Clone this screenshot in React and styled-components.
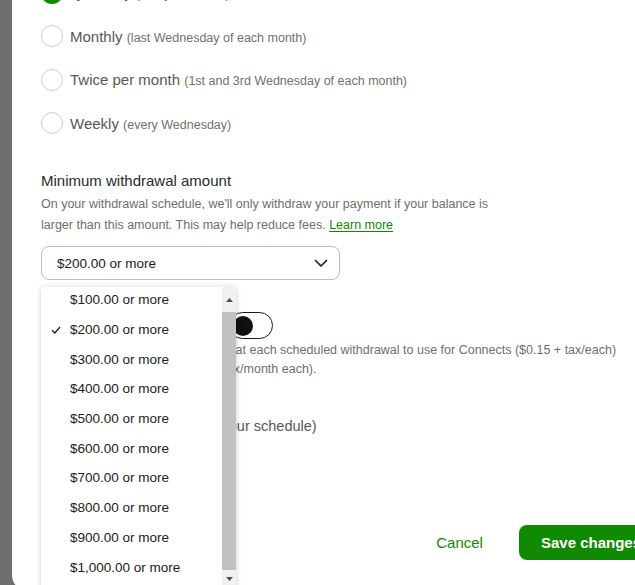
import React from "react";
import styled, { createGlobalStyle } from "styled-components";

const GlobalStyle = createGlobalStyle`
  html, body {
    margin: 0;
    padding: 0;
    background: #6f6f6f;
    overflow: hidden;
  }
  body {
    font-family: "Liberation Sans", Arial, sans-serif;
  }
  * { box-sizing: border-box; }
`;

const Page = styled.div`
  width: 635px;
  height: 585px;
  overflow: hidden;
  padding-left: 12px;
`;

const Modal = styled.div`
  position: relative;
  width: 660px;
  height: 620px;
  margin-top: -29px;
  background: #fff;
  border-bottom-left-radius: 16px;
  padding: 0 9px 0 29px;
`;

const RadioList = styled.div`
  display: flex;
  flex-direction: column;
`;

const RadioRow = styled.label`
  display: flex;
  align-items: center;
  height: 43.5px;
  gap: 7px;
  font-size: 15px;
  color: #575757;
`;

const RadioCircle = styled.span`
  width: 22px;
  height: 22px;
  border-radius: 50%;
  flex: none;
  border: ${(p) => (p.$checked ? "6px solid #108a00" : "1px solid #cfcfcf")};
  background: #fff;
`;

const Sub = styled.span`
  font-size: 12.5px;
  color: #707070;
`;

const Heading = styled.div`
  margin-top: 25px;
  font-size: 15px;
  line-height: 22px;
  color: #2a2a2a;
`;

const Desc = styled.p`
  margin: 2px 0 0;
  font-size: 12.5px;
  line-height: 21px;
  color: #6e6e6e;
  max-width: 460px;
`;

const Link = styled.a`
  color: #108a00;
  text-decoration: underline;
  text-underline-offset: 2px;
`;

const SelectWrap = styled.div`
  position: relative;
  margin-top: 10px;
  width: 299px;
`;

const SelectBox = styled.div`
  height: 34px;
  border: 1px solid #bdbdbd;
  border-radius: 8px;
  display: flex;
  align-items: center;
  justify-content: space-between;
  padding: 0 11px 0 15px;
  font-size: 13.5px;
  color: #222;
`;

const Dropdown = styled.div`
  position: absolute;
  top: 41px;
  left: 0;
  width: 195px;
  height: 305px;
  background: #fff;
  border-radius: 4px 4px 0 0;
  box-shadow: 0 0 6px rgba(0, 0, 0, 0.14), 0 2px 4px rgba(0, 0, 0, 0.08);
  display: flex;
  overflow: hidden;
  z-index: 5;
`;

const Items = styled.ul`
  list-style: none;
  margin: -2px 0 0;
  padding: 0;
  flex: 1;
`;

const Item = styled.li`
  height: 29.7px;
  display: flex;
  align-items: center;
  padding-left: 9px;
  gap: 9px;
  font-size: 13.5px;
  color: #222;
`;

const CheckSlot = styled.span`
  width: 11px;
  display: flex;
  justify-content: center;
`;

const Scrollbar = styled.div`
  width: 14px;
  flex: none;
  background: #f1f1f1;
  display: flex;
  flex-direction: column;
`;

const ScrollArrow = styled.div`
  height: ${(p) => p.$h}px;
  display: flex;
  align-items: center;
  justify-content: center;
  flex: none;
`;

const Thumb = styled.div`
  height: 258px;
  background: #c1c1c1;
  flex: none;
`;

const ToggleRow = styled.div`
  margin-top: 32px;
  width: 232px;
  height: 27px;
  display: flex;
  align-items: center;
  justify-content: space-between;
  font-size: 15px;
  color: #2a2a2a;
`;

const Toggle = styled.span`
  width: 44px;
  height: 27px;
  border: 1px solid #1a1a1a;
  border-radius: 14px;
  display: flex;
  align-items: center;
  padding-left: 3px;
`;

const Knob = styled.span`
  width: 20px;
  height: 20px;
  border-radius: 50%;
  background: #111;
`;

const SmallText = styled.p`
  margin: 2px 0 0;
  font-size: 12.5px;
  line-height: 19px;
  color: #6e6e6e;
  white-space: nowrap;
`;

const OptionLine = styled.div`
  margin-top: 36px;
  font-size: 14.5px;
  line-height: 22px;
  color: #575757;
  white-space: nowrap;
`;

const Footer = styled.div`
  margin-top: 88px;
  display: flex;
  justify-content: flex-end;
  align-items: center;
  gap: 14px;
`;

const Button = styled.button`
  height: 35px;
  border-radius: 8px;
  font-family: "Liberation Sans", Arial, sans-serif;
  font-size: 15px;
  padding: 0 22px;
  border: none;
  cursor: pointer;
  background: ${(p) => (p.$primary ? "#108a00" : "transparent")};
  color: ${(p) => (p.$primary ? "#fff" : "#108a00")};
  font-weight: ${(p) => (p.$primary ? 700 : 400)};
`;

const Chevron = () => (
  <svg width="14" height="9" viewBox="0 0 14 9" fill="none">
    <path d="M1.5 1.5 L7 7 L12.5 1.5" stroke="#222" strokeWidth="1.7" strokeLinecap="round" strokeLinejoin="round" />
  </svg>
);

const Check = () => (
  <svg width="10" height="8" viewBox="0 0 10 8" fill="none">
    <path d="M1 4.2 L3.8 7 L9 1" stroke="#222" strokeWidth="1.4" />
  </svg>
);

const Tri = ({ down }) => (
  <svg width="7" height="4" viewBox="0 0 7 4">
    <path d={down ? "M0 0 L7 0 L3.5 4 Z" : "M0 4 L7 4 L3.5 0 Z"} fill="#505050" />
  </svg>
);

const amounts = [
  "$100.00",
  "$200.00",
  "$300.00",
  "$400.00",
  "$500.00",
  "$600.00",
  "$700.00",
  "$800.00",
  "$900.00",
  "$1,000.00",
  "$2,000.00",
];

export default function App() {
  return (
    <Page>
      <GlobalStyle />
      <Modal>
        <RadioList>
          <RadioRow>
            <RadioCircle $checked />
            <span>
              Quarterly <Sub>(every 3 months)</Sub>
            </span>
          </RadioRow>
          <RadioRow>
            <RadioCircle />
            <span>
              Monthly <Sub>(last Wednesday of each month)</Sub>
            </span>
          </RadioRow>
          <RadioRow>
            <RadioCircle />
            <span>
              Twice per month <Sub>(1st and 3rd Wednesday of each month)</Sub>
            </span>
          </RadioRow>
          <RadioRow>
            <RadioCircle />
            <span>
              Weekly <Sub>(every Wednesday)</Sub>
            </span>
          </RadioRow>
        </RadioList>

        <Heading>Minimum withdrawal amount</Heading>
        <Desc>
          On your withdrawal schedule, we'll only withdraw your payment if your balance is
          larger than this amount. This may help reduce fees. <Link>Learn more</Link>
        </Desc>

        <SelectWrap>
          <SelectBox>
            <span>$200.00 or more</span>
            <Chevron />
          </SelectBox>
          <Dropdown>
            <Items>
              {amounts.map((a) => (
                <Item key={a}>
                  <CheckSlot>{a === "$200.00" ? <Check /> : null}</CheckSlot>
                  {a} or more
                </Item>
              ))}
            </Items>
            <Scrollbar>
              <ScrollArrow $h={25}>
                <Tri />
              </ScrollArrow>
              <Thumb />
              <ScrollArrow $h={17}>
                <Tri down />
              </ScrollArrow>
            </Scrollbar>
          </Dropdown>
        </SelectWrap>

        <ToggleRow>
          <span>Reserve balance</span>
          <Toggle>
            <Knob />
          </Toggle>
        </ToggleRow>
        <SmallText>
          Keep a balance of $20.00 on hand at each scheduled withdrawal to use for Connects ($0.15 + tax/each)
          <br />
          and Freelancer Plus (US$9.99 + tax/month each).
        </SmallText>

        <OptionLine>Manual withdrawals (not on your schedule)</OptionLine>

        <Footer>
          <Button>Cancel</Button>
          <Button $primary>Save changes</Button>
        </Footer>
      </Modal>
    </Page>
  );
}
